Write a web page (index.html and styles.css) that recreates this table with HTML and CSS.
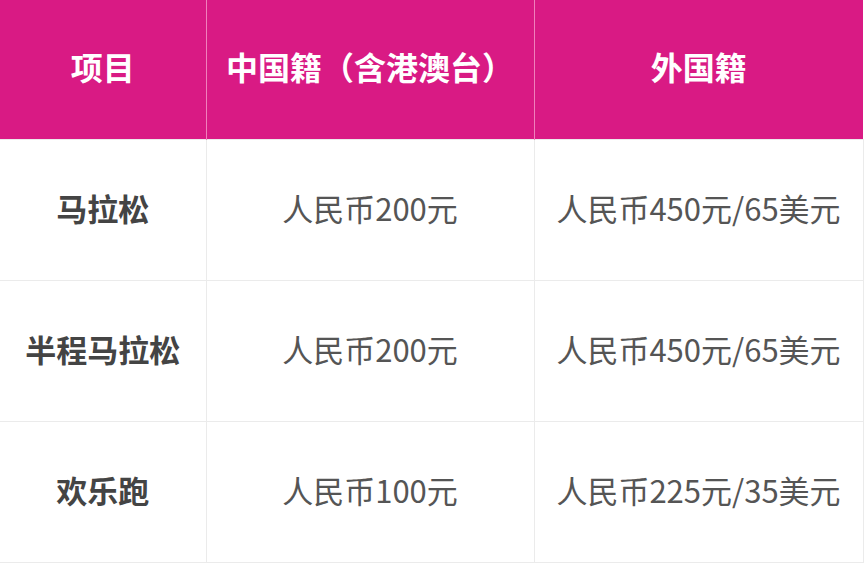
FILE: index.html
```html
<!DOCTYPE html>
<html lang="zh-CN">
<head>
<meta charset="utf-8">
<link rel="stylesheet" href="styles.css">
</head>
<body>
<table class="fee">
  <colgroup>
    <col class="c1"><col class="c2"><col class="c3">
  </colgroup>
  <thead>
    <tr><th>项目</th><th>中国籍（含港澳台）</th><th>外国籍</th></tr>
  </thead>
  <tbody>
    <tr><td class="name">马拉松</td><td>人民币200元</td><td>人民币450元/65美元</td></tr>
    <tr><td class="name">半程马拉松</td><td>人民币200元</td><td>人民币450元/65美元</td></tr>
    <tr><td class="name">欢乐跑</td><td>人民币100元</td><td>人民币225元/35美元</td></tr>
  </tbody>
</table>
</body>
</html>
```
FILE: styles.css
```css
html, body {
  margin: 0;
  padding: 0;
  background: #fff;
}
.fee {
  border-collapse: collapse;
  table-layout: fixed;
  width: 863px;
  font-family: "Noto Sans CJK SC", "Noto Sans", sans-serif;
}
.c1 { width: 206px; }
.c2 { width: 328px; }
.c3 { width: 329px; }
.fee th {
  background: #d91a84;
  color: #fff;
  font-size: 32px;
  font-weight: 700;
  height: 131px;
  padding: 0 0 8px;
  text-align: center;
  border-left: 1px solid #f080bc;
}
.fee th:first-child { border-left: none; }
.fee td {
  font-size: 31px;
  height: 135px;
  padding: 0 0 5px;
  text-align: center;
  color: #555;
  border: 1px solid #ebebeb;
}
.fee td:first-child { border-left: none; }
.fee td.name {
  color: #444;
  font-weight: 700;
}
```
